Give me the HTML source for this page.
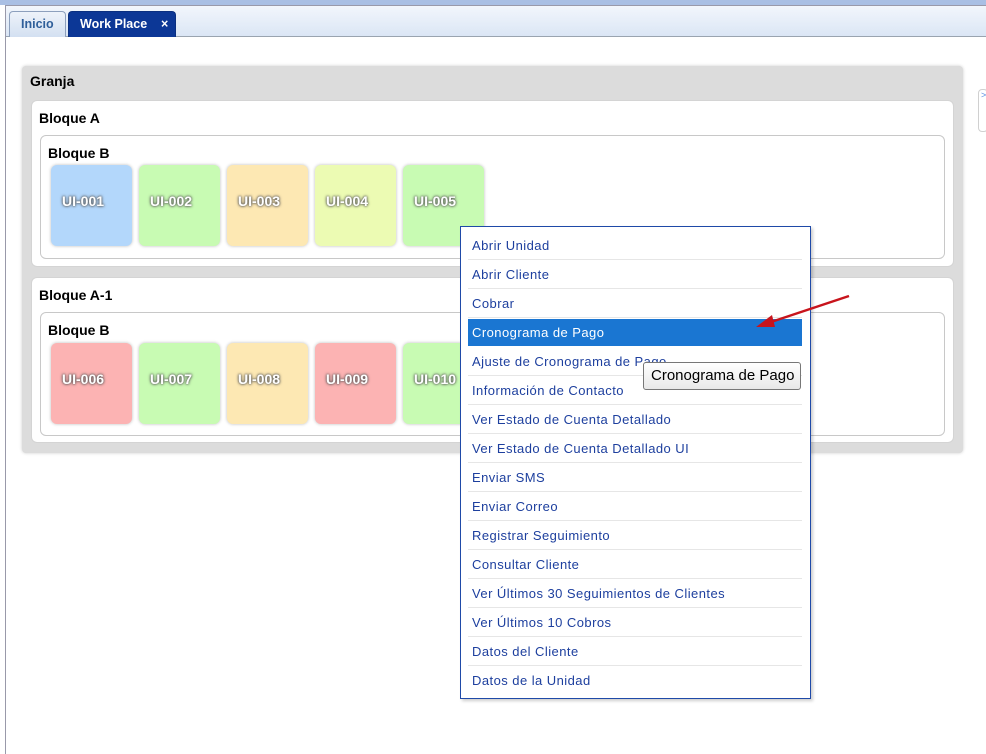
<!DOCTYPE html>
<html><head><meta charset="utf-8"><style>
*{box-sizing:border-box;margin:0;padding:0}
body{width:986px;height:754px;background:#fff;font-family:"Liberation Sans",Arial,sans-serif;position:relative;overflow:hidden}
.abs{position:absolute}
.top{left:0;top:0;width:986px;height:5px;background:#a9bfe4}
.frame{left:5px;top:5px;width:981px;height:749px;border-left:1px solid #99a;border-top:1px solid #99a;background:#fff}
.tabbar{left:6px;top:6px;width:980px;height:31px;background:linear-gradient(#f2f6fc,#dbe6f5);border-bottom:1px solid #9aa4b0}
.tab{top:11px;height:26px;border:1px solid #8da0bd;border-bottom:none;border-radius:4px 4px 0 0;font-size:12.5px;font-weight:bold;line-height:24px}
.t1{left:9px;width:57px;background:linear-gradient(#eef3fa,#d3e0f1);color:#2f5f9a;padding-left:11px}
.t2{left:68px;width:108px;background:#0c3796;color:#fff;padding-left:11px;border-color:#0a2f80}
.granja{left:22px;top:66px;width:941px;height:387px;background:#dcdcdc;border-radius:4px;box-shadow:0 0 3px #ccc}
h3{font-size:14px;font-weight:bold;color:#000;position:absolute}
.blk{background:#fff;border-radius:6px;border:1px solid #d4d4d4}
.inner{background:#fff;border-radius:6px;border:1px solid #c8c8c8}
.tile{width:81px;height:81px;border-radius:6px;box-shadow:0 0 3px #bbb;color:#fff;font-weight:bold;font-size:14px;line-height:72px;padding-left:11px;text-shadow:0 0 3px #555,0 0 2px #555}
.menu{left:460px;top:226px;width:351px;height:473px;background:#fff;border:1px solid #1f4aa8;box-shadow:2px 2px 3px rgba(0,0,0,.2)}
.item{position:absolute;left:7px;width:334px;height:29px;border-bottom:1px solid #e6e6e6;font-size:13px;color:#1d3f9e;line-height:29px;padding-left:4px;letter-spacing:.45px}
.hl{background:#1a76d2;color:#fff;border-bottom:none}
.tip{left:643px;top:362px;width:158px;height:28px;background:linear-gradient(#fff,#e8e8e8);border:1px solid #777;border-radius:3px;font-size:15px;line-height:26px;padding-left:7px;color:#000}
</style></head><body>
<div class="abs top"></div>
<div class="abs frame"></div>
<div class="abs tabbar"></div>
<div class="abs tab t1">Inicio</div>
<div class="abs tab t2">Work Place<span style="position:absolute;left:92px">×</span></div>
<div class="abs" style="left:978px;top:89px;width:10px;height:43px;border:1px solid #d0d0d0;border-radius:4px;"></div>
<div class="abs" style="left:981px;top:90px;font-size:9px;color:#5a8ee0">&gt;</div>

<div class="abs granja"></div>
<h3 style="left:30px;top:73px">Granja</h3>

<div class="abs blk" style="left:31px;top:100px;width:923px;height:167px"></div>
<h3 style="left:39px;top:110px">Bloque A</h3>
<div class="abs inner" style="left:40px;top:135px;width:905px;height:124px"></div>
<h3 style="left:48px;top:145px">Bloque B</h3>
<div class="abs tile" style="left:51px;top:165px;background:#b3d7fb">UI-001</div>
<div class="abs tile" style="left:139px;top:165px;background:#c8fbb3">UI-002</div>
<div class="abs tile" style="left:227px;top:165px;background:#fde8b3">UI-003</div>
<div class="abs tile" style="left:315px;top:165px;background:#ecfbb3">UI-004</div>
<div class="abs tile" style="left:403px;top:165px;background:#c8fbb3">UI-005</div>

<div class="abs blk" style="left:31px;top:277px;width:923px;height:166px"></div>
<h3 style="left:39px;top:287px">Bloque A-1</h3>
<div class="abs inner" style="left:40px;top:312px;width:905px;height:124px"></div>
<h3 style="left:48px;top:322px">Bloque B</h3>
<div class="abs tile" style="left:51px;top:343px;background:#fcb3b3">UI-006</div>
<div class="abs tile" style="left:139px;top:343px;background:#c8fbb3">UI-007</div>
<div class="abs tile" style="left:227px;top:343px;background:#fde8b3">UI-008</div>
<div class="abs tile" style="left:315px;top:343px;background:#fcb3b3">UI-009</div>
<div class="abs tile" style="left:403px;top:343px;background:#c8fbb3">UI-010</div>

<div class="abs menu">
<div class="item" style="top:4px">Abrir Unidad</div>
<div class="item" style="top:33px">Abrir Cliente</div>
<div class="item" style="top:62px">Cobrar</div>
<div class="item hl" style="top:92px;height:27px;line-height:27px">Cronograma de Pago</div>
<div class="item" style="top:120px">Ajuste de Cronograma de Pago</div>
<div class="item" style="top:149px">Información de Contacto</div>
<div class="item" style="top:178px">Ver Estado de Cuenta Detallado</div>
<div class="item" style="top:207px">Ver Estado de Cuenta Detallado UI</div>
<div class="item" style="top:236px">Enviar SMS</div>
<div class="item" style="top:265px">Enviar Correo</div>
<div class="item" style="top:294px">Registrar Seguimiento</div>
<div class="item" style="top:323px">Consultar Cliente</div>
<div class="item" style="top:352px">Ver Últimos 30 Seguimientos de Clientes</div>
<div class="item" style="top:381px">Ver Últimos 10 Cobros</div>
<div class="item" style="top:410px">Datos del Cliente</div>
<div class="item" style="top:439px;border-bottom:none">Datos de la Unidad</div>
</div>
<div class="abs tip">Cronograma de Pago</div>
<svg class="abs" style="left:750px;top:290px" width="110" height="45">
<line x1="99" y1="6" x2="18" y2="33" stroke="#c8141c" stroke-width="2.5"/>
<polygon points="6,37 22,25 25,37" fill="#c8141c"/>
</svg>
</body></html>
